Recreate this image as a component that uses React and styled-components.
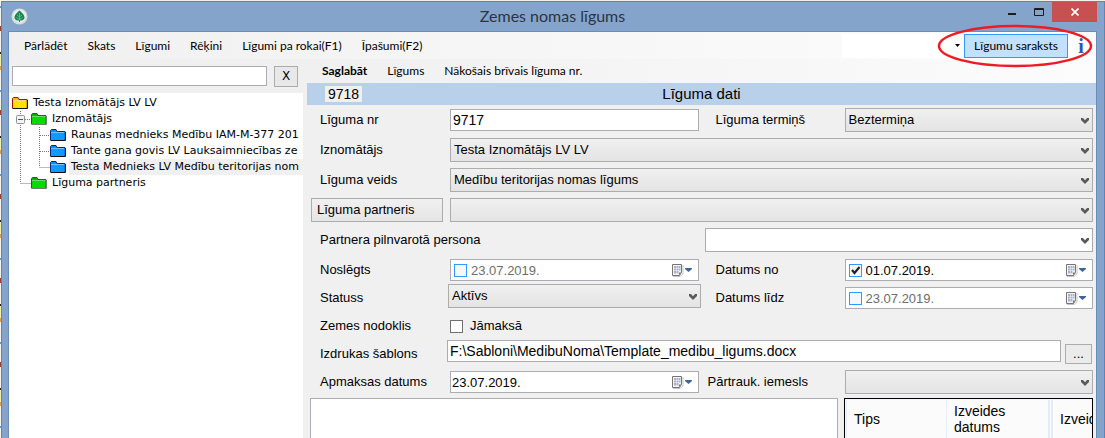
import React from "react";
import styled, { createGlobalStyle, css } from "styled-components";

const ui = 'Lato, "Open Sans", sans-serif';
const form = '"Liberation Sans", Arial, sans-serif';
const treeFont = '"DejaVu Sans", Verdana, sans-serif';
const edge = "#abadb3";

const Global = createGlobalStyle`
  *, *::before, *::after { box-sizing: border-box; }
  body { margin: 0; background: #f1f1ec; overflow: hidden; }
  button, input, select, textarea { font: inherit; color: inherit; margin: 0; border-radius: 0; }
`;

const Desktop = styled.div`
  height: 100vh;
  padding: 1px 0 0 1px;
  color: #000;
  font: 13px/16px ${form};
  background: repeating-linear-gradient(
    #f4f4f0 0 6px, #5aa0dc 6px 8px, #f4f4f0 8px 26px, #a04030 26px 31px,
    #f4f4f0 31px 52px, #222 52px 54px, #eeeeb0 54px 66px, #e8a050 66px 70px, #f4f4f0 70px 84px
  ) 0 0 / 1px 100% no-repeat, #f1f1ec;
`;

const Window = styled.div`
  height: 100%;
  display: flex;
  flex-direction: column;
  padding: 0 7px 0 6px;
  border: 1px solid #6283ae;
  border-bottom: 0;
  background: #85a4cc;
  overflow: hidden;
`;

const TitleBar = styled.header`
  display: grid;
  grid-template-columns: 1fr auto 1fr;
  height: 29px;
  flex: none;
`;

const AppIcon = styled.svg`
  margin: 6px 0 0 3px;
`;

const Title = styled.h1`
  margin: 0;
  font: 16px/28px ${ui};
  color: #2d3440;
`;

const WindowButtons = styled.div`
  display: flex;
  justify-content: flex-end;
  align-items: flex-start;
`;

const WindowButton = styled.button`
  display: grid;
  place-items: center;
  width: ${(p) => (p.$close ? 45 : 27)}px;
  height: 20px;
  padding: 0;
  border: 0;
  background: ${(p) => (p.$close ? "#c75050" : "transparent")};
`;

const Client = styled.div`
  flex: 1;
  min-height: 0;
  display: flex;
  flex-direction: column;
  border: 1px solid #6b8cb6;
  border-bottom: 0;
  background: #f0f0f0;
`;

const MenuBar = styled.nav`
  display: flex;
  align-items: center;
  flex: none;
  height: 27px;
  padding-left: 15px;
  gap: 20px;
  font: 12px/16px ${ui};
  background: linear-gradient(90deg, #f0f0f0, #fdfdfd);
`;

const MenuButton = styled.button`
  padding: 0;
  border: 0;
  background: none;
  white-space: nowrap;
  font-weight: ${(p) => (p.$strong ? 700 : 400)};
`;

const MenuTools = styled.div`
  position: relative;
  display: flex;
  align-items: center;
  align-self: stretch;
  margin-left: auto;
  padding-right: 11px;
`;

const QuickInput = styled.input`
  width: 108px;
  height: 24px;
  border: 0;
  background: #fff;
`;

const CaretButton = styled.button`
  display: grid;
  place-items: center;
  width: 14px;
  height: 24px;
  padding: 0;
  border: 0;
  background: none;
`;

const ListButton = styled.button`
  width: 104px;
  height: 24px;
  padding: 0;
  border: 1px solid #3399ff;
  background: #c2e0ff;
  white-space: nowrap;
`;

const InfoButton = styled.button`
  width: 8px;
  margin-left: 9px;
  padding: 0;
  border: 0;
  background: none;
  color: #2f55b8;
  font: bold 20px/20px "Liberation Serif", serif;
`;

const Marker = styled.svg`
  position: absolute;
  right: 3px;
  top: -8px;
  pointer-events: none;
`;

const Body = styled.div`
  flex: 1;
  min-height: 0;
  display: grid;
  grid-template-columns: 294px minmax(0, 1fr);
  column-gap: 4px;
`;

const Sidebar = styled.aside`
  display: flex;
  flex-direction: column;
  min-width: 0;
  min-height: 0;
`;

const SearchRow = styled.div`
  display: flex;
  align-items: center;
  gap: 7px;
  height: 34px;
  padding: 0 5px 0 3px;
`;

const SearchInput = styled.input`
  flex: 1;
  min-width: 0;
  height: 20px;
  border: 1px solid ${edge};
  background: #fff;
`;

const ClearButton = styled.button`
  width: 24px;
  height: 21px;
  padding: 0;
  border: 1px solid #acacac;
  background: #e8e8e8;
  font: 12px/16px ${treeFont};
`;

const Tree = styled.ul`
  flex: 1;
  margin: 0;
  padding: 2px 0 0 3px;
  list-style: none;
  background: #fff;
  overflow: hidden;
  font: 11px/16px ${treeFont};
`;

const TreeRow = styled.li`
  display: flex;
  height: 16px;
  white-space: nowrap;
  svg { flex: none; }
`;

const TreeLabel = styled.span`
  margin-left: 3px;
  padding: 0 2px;
  ${(p) => p.$selected && css`flex: 1; background: #f0f0f0;`}
`;

const Pane = styled.main`
  display: flex;
  flex-direction: column;
  min-width: 0;
  min-height: 0;
`;

const ToolRow = styled.div`
  display: flex;
  align-items: center;
  gap: 20px;
  height: 24px;
  flex: none;
  padding-left: 15px;
  font: 12px/16px ${ui};
  background: linear-gradient(90deg, #f0f0f0, #fcfcfc);
`;

const Band = styled.div`
  display: grid;
  grid-template-columns: 1fr auto 1fr;
  align-items: center;
  height: 22px;
  flex: none;
  background: #b9d0eb;
`;

const NextNumber = styled.output`
  justify-self: start;
  margin-left: 18px;
  padding: 0 3px;
  background: #f0f0f0;
  font-size: 14px;
`;

const BandTitle = styled.h2`
  margin: 0;
  font: 15px/20px ${form};
`;

const Row = styled.div`
  display: grid;
  grid-template-columns: 140px minmax(0, 1fr) 146px minmax(0, 1fr);
  align-items: center;
  flex: none;
  height: ${(p) => (p.$tight ? 28 : 30)}px;
  padding: 0 3px;
`;

const Label = styled.label`
  padding-left: ${(p) => (p.$second ? (p.$wide ? 9 : 17) : 10)}px;
  white-space: nowrap;
`;

const PartnerButton = styled.button`
  width: 132px;
  height: 24px;
  margin-left: 1px;
  padding: 0 5px;
  border: 1px solid #acacac;
  background: linear-gradient(#f0f0f0, #e5e5e5);
  text-align: left;
`;

const TextInput = styled.input`
  width: 100%;
  min-width: 0;
  height: 22px;
  padding: 0 2px;
  border: 1px solid ${edge};
  background: #fff;
  font-size: 14px;
`;

const SelectBox = styled.span`
  display: grid;
  align-items: center;
  grid-column: ${(p) => (p.$span ? `span ${p.$span}` : "auto")};
  > * { grid-area: 1 / 1; }
  > svg { justify-self: end; margin-right: 4px; pointer-events: none; }
  ${(p) => p.$raised && css`align-self: start; margin: 0 -2px;`}
  ${(p) => p.$inset && css`margin-left: 6px;`}
`;

const NativeSelect = styled.select`
  appearance: none;
  width: 100%;
  height: 24px;
  padding: 0 20px 0 3px;
  border: 1px solid #acacac;
  background: ${(p) => (p.$white ? "#fff" : "linear-gradient(#f0f0f0, #e4e4e4)")};
`;

const DateBox = styled.span`
  display: flex;
  align-items: center;
  height: 22px;
  padding: 0 5px 0 ${(p) => (p.$check ? 3 : 1)}px;
  border: 1px solid ${edge};
  background: #fff;
  color: ${(p) => (p.$off ? "#6d6d6d" : "#000")};
`;

const DateInput = styled.input`
  flex: 1;
  min-width: 0;
  height: 18px;
  padding: 0;
  border: 0;
  background: none;
`;

const PickerButton = styled.button`
  display: flex;
  padding: 0;
  border: 0;
  background: none;
`;

const Check = styled.input`
  appearance: none;
  flex: none;
  width: 13px;
  height: 13px;
  border: 1px solid ${(p) => (p.$blue ? "#3399ff" : "#707070")};
  background: ${(p) => (p.$blue ? "#f3f8ff" : "#fff")};
`;

const CheckWrap = styled.span`
  display: grid;
  margin-right: 4px;
  > * { grid-area: 1 / 1; }
  > svg { pointer-events: none; }
`;

const CheckLabel = styled.label`
  display: flex;
  align-items: center;
  gap: 7px;
`;

const FileRow = styled.div`
  grid-column: span 3;
  display: flex;
  gap: 4px;
  align-self: start;
  margin: 0 1px 0 -3px;
`;

const BrowseButton = styled.button`
  flex: none;
  width: 27px;
  height: 20px;
  margin-top: 4px;
  padding: 0;
  border: 1px solid #acacac;
  background: #ebebeb;
`;

const Bottom = styled.div`
  flex: 1;
  min-height: 0;
  display: grid;
  grid-template-columns: minmax(0, 528fr) minmax(0, 249fr);
  gap: 6px;
  padding: 1px 3px 0;
`;

const FieldGroup = styled.section`
  flex: none;
  padding-bottom: 1px;
`;

const Notes = styled.textarea`
  border: 1px solid ${edge};
  border-bottom: 0;
  background: #fff;
  resize: none;
`;

const TableFrame = styled.div`
  overflow: hidden;
  padding-top: 1px;
  padding-left: 1px;
  border: 1px solid #000;
  border-bottom: 0;
  background: #f3f7fd;
`;

const Table = styled.table`
  width: 320px;
  table-layout: fixed;
  border-collapse: collapse;
  font-size: 14px;
  th {
    height: 38px;
    padding: 0 7px;
    border: 1px solid #e3ecf8;
    border-top: 0;
    background: #fbfbfb;
    font-weight: 400;
    text-align: left;
  }
  th:nth-child(2) { border-right: 5px double #e3ecf8; }
`;

const Chevron = () => (
  <svg width="8" height="7" viewBox="0 0 8 7" aria-hidden="true">
    <path d="M0 1H2L4 3.2L6 1H8V3L4 7L0 3Z" fill="#5a5a5a" />
  </svg>
);

const CalendarIcon = () => (
  <svg width="22" height="14" viewBox="0 0 22 14" aria-hidden="true">
    <path d="M2 13.5H9L12 11V2" fill="none" stroke="#c4c4c4" />
    <path d="M1.5 1.5H10.5V9.5L8.5 12.5H1.5Z" fill="#f4f6fa" stroke="#7d7272" strokeLinejoin="round" />
    <path d="M3 3H5V5H3ZM5.5 3H7.5V5H5.5ZM8 3H9.5V5H8ZM3 5.5H5V7.5H3ZM5.5 5.5H7.5V7.5H5.5ZM8 5.5H9.5V7.5H8ZM3 8H5V10.5H3ZM5.5 8H7.5V10.5H5.5Z" fill="#a3b3c9" />
    <path d="M8 12.5V9.5H10.5Z" fill="#7d7272" />
    <path d="M14 5H21V6L17.5 9L14 6Z" fill="#44639a" />
  </svg>
);

const folderColors = {
  yellow: ["#ffe100", "#a01000", "#ffc000"],
  green: ["#00dc00", "#087008", "#00b400"],
  blue: ["#0a9cff", "#002a78", "#0090f8"],
};

const Folder = ({ color }) => {
  const [fill, stroke, tab] = folderColors[color];
  return (
    <svg width="16" height="16" viewBox="0 0 16 16" aria-hidden="true">
      <path d="M0.5 13V3.5L1.5 2.5H6L7 4.5H15V13Z" fill={tab} stroke={stroke} />
      <path d="M1 6H14.5V13H1Z" fill={fill} />
      <path d="M1 5.5H14.5" stroke="#fff" strokeOpacity="0.45" />
      <path d="M0.5 13.5H15.5V5" fill="none" stroke={color === "green" ? "#708070" : "#111"} />
    </svg>
  );
};

const guidePaths = {
  pass: "M8.5 0V16",
  tee: "M8.5 0V16M9 8.5H19",
  elbow: "M8.5 0V8M8.5 8.5H19",
  expander: "M8.5 0V16M9 8.5H19",
};

const Guide = ({ kind }) => (
  <svg width="19" height="16" viewBox="0 0 19 16" aria-hidden="true">
    <path d={guidePaths[kind]} stroke="#777" strokeDasharray="1 1" />
    {kind === "expander" && (
      <>
        <rect x="4.5" y="4.5" width="8" height="8" rx="1" fill="#f4f4f4" stroke="#919191" />
        <path d="M6 8.5H11" stroke="#3a55a5" />
      </>
    )}
  </svg>
);

const treeRows = [
  { text: "Testa Iznomātājs LV LV", color: "yellow", guides: [] },
  { text: "Iznomātājs", color: "green", guides: ["expander"] },
  { text: "Raunas mednieks Medību IAM-M-377 201", color: "blue", guides: ["pass", "tee"] },
  { text: "Tante gana govis LV Lauksaimniecības ze", color: "blue", guides: ["pass", "tee"] },
  { text: "Testa Mednieks LV Medību teritorijas nom", color: "blue", guides: ["pass", "elbow"], selected: true },
  { text: "Līguma partneris", color: "green", guides: ["elbow"] },
];

const Select = ({ id, value = "", label, white, ...box }) => (
  <SelectBox {...box}>
    <NativeSelect id={id} aria-label={label} $white={white} defaultValue={value}>
      <option value={value}>{value}</option>
    </NativeSelect>
    <Chevron />
  </SelectBox>
);

const DateField = ({ id, value, check, checked }) => (
  <DateBox $check={check} $off={check && !checked}>
    {check && (
      <CheckWrap>
        <Check type="checkbox" $blue defaultChecked={checked} aria-label="Datums norādīts" />
        {checked && (
          <svg width="13" height="13" viewBox="0 0 13 13" aria-hidden="true">
            <path d="M3 6L5.5 9L10.5 3" fill="none" stroke="#222" strokeWidth="2.2" />
          </svg>
        )}
      </CheckWrap>
    )}
    <DateInput id={id} defaultValue={value} />
    <PickerButton aria-label="Kalendārs"><CalendarIcon /></PickerButton>
  </DateBox>
);

export default function App() {
  return (
    <Desktop>
      <Global />
      <Window>
        <TitleBar>
          <AppIcon width="17" height="17" viewBox="0 0 17 17" aria-hidden="true">
            <circle cx="8.5" cy="8.5" r="8" fill="#d9dcda" />
            <circle cx="8.5" cy="8" r="6.5" fill="#eceeed" />
            <path d="M8.5 2.5C10 4 13.5 6.5 13.5 9.5C13.5 12 11 12.5 9 12.5V14H8V12.5C6 12.5 3.5 12 3.5 9.5C3.5 6.5 7 4 8.5 2.5Z" fill="#168755" />
            <path d="M8.5 5V12M6 7L8.5 9L11 7M5.5 9.5L8.5 11.5L11.5 9.5" fill="none" stroke="#7cc3a2" strokeWidth="0.7" />
          </AppIcon>
          <Title>Zemes nomas līgums</Title>
          <WindowButtons>
            <WindowButton aria-label="Minimizēt">
              <svg width="8" height="8"><path d="M0 6H8" stroke="#1c1c1c" strokeWidth="2" /></svg>
            </WindowButton>
            <WindowButton aria-label="Maksimizēt">
              <svg width="10" height="8"><path d="M0.5 0.5H9.5V7.5H0.5ZM0 1.5H10" fill="none" stroke="#1c1c1c" /></svg>
            </WindowButton>
            <WindowButton $close aria-label="Aizvērt">
              <svg width="8" height="8"><path d="M0.5 0.5L7.5 7.5M7.5 0.5L0.5 7.5" stroke="#fff" strokeWidth="1.6" /></svg>
            </WindowButton>
          </WindowButtons>
        </TitleBar>
        <Client>
          <MenuBar>
            {["Pārlādēt", "Skats", "Līgumi", "Rēķini", "Līgumi pa rokai(F1)", "Īpašumi(F2)"].map((t) => (
              <MenuButton key={t}>{t}</MenuButton>
            ))}
            <MenuTools>
              <QuickInput aria-label="Ātrā meklēšana" />
              <CaretButton aria-label="Izvēlēties">
                <svg width="5" height="3"><path d="M0 0H5L2.5 3Z" fill="#000" /></svg>
              </CaretButton>
              <ListButton>Līgumu saraksts</ListButton>
              <InfoButton aria-label="Informācija">i</InfoButton>
              <Marker width="156" height="44" aria-hidden="true">
                <ellipse cx="78" cy="22" rx="76" ry="20" fill="none" stroke="#ed1c24" strokeWidth="2.5" />
              </Marker>
            </MenuTools>
          </MenuBar>
          <Body>
            <Sidebar>
              <SearchRow>
                <SearchInput aria-label="Meklēt" />
                <ClearButton>X</ClearButton>
              </SearchRow>
              <Tree>
                {treeRows.map((r) => (
                  <TreeRow key={r.text}>
                    {r.guides.map((g, i) => <Guide key={i} kind={g} />)}
                    <Folder color={r.color} />
                    <TreeLabel $selected={r.selected}>{r.text}</TreeLabel>
                  </TreeRow>
                ))}
              </Tree>
            </Sidebar>
            <Pane>
              <ToolRow>
                <MenuButton $strong>Saglabāt</MenuButton>
                <MenuButton>Līgums</MenuButton>
                <MenuButton>Nākošais brīvais līguma nr.</MenuButton>
              </ToolRow>
              <Band>
                <NextNumber>9718</NextNumber>
                <BandTitle>Līguma dati</BandTitle>
              </Band>
              <FieldGroup>
                <Row>
                  <Label htmlFor="nr">Līguma nr</Label>
                  <TextInput id="nr" defaultValue="9717" />
                  <Label htmlFor="term" $second>Līguma termiņš</Label>
                  <Select id="term" value="Beztermiņa" />
                </Row>
                <Row>
                  <Label htmlFor="lessor">Iznomātājs</Label>
                  <Select id="lessor" value="Testa Iznomātājs LV LV" $span={3} />
                </Row>
                <Row>
                  <Label htmlFor="kind">Līguma veids</Label>
                  <Select id="kind" value="Medību teritorijas nomas līgums" $span={3} />
                </Row>
                <Row>
                  <PartnerButton>Līguma partneris</PartnerButton>
                  <Select label="Līguma partneris" $span={3} />
                </Row>
                <Row>
                  <Label htmlFor="person">Partnera pilnvarotā persona</Label>
                  <span />
                  <Select id="person" white $span={2} $inset />
                </Row>
              </FieldGroup>
              <FieldGroup>
                <Row $tight>
                  <Label htmlFor="signed">Noslēgts</Label>
                  <DateField id="signed" value="23.07.2019." check />
                  <Label htmlFor="from" $second>Datums no</Label>
                  <DateField id="from" value="01.07.2019." check checked />
                </Row>
                <Row $tight>
                  <Label htmlFor="status">Statuss</Label>
                  <Select id="status" value="Aktīvs" $raised />
                  <Label htmlFor="to" $second>Datums līdz</Label>
                  <DateField id="to" value="23.07.2019." check />
                </Row>
                <Row $tight>
                  <Label as="span">Zemes nodoklis</Label>
                  <CheckLabel><Check type="checkbox" />Jāmaksā</CheckLabel>
                </Row>
                <Row $tight>
                  <Label htmlFor="template">Izdrukas šablons</Label>
                  <FileRow>
                    <TextInput id="template" defaultValue={"F:\\Sabloni\\MedibuNoma\\Template_medibu_ligums.docx"} />
                    <BrowseButton>...</BrowseButton>
                  </FileRow>
                </Row>
                <Row $tight>
                  <Label htmlFor="pay">Apmaksas datums</Label>
                  <DateField id="pay" value="23.07.2019." />
                  <Label htmlFor="reason" $second $wide>Pārtrauk. iemesls</Label>
                  <Select id="reason" />
                </Row>
              </FieldGroup>
              <Bottom>
                <Notes aria-label="Piezīmes" />
                <TableFrame>
                  <Table>
                    <colgroup><col style={{ width: 100 }} /><col style={{ width: 104 }} /><col /></colgroup>
                    <thead>
                      <tr><th>Tips</th><th>Izveides datums</th><th>Izveidoja</th></tr>
                    </thead>
                  </Table>
                </TableFrame>
              </Bottom>
            </Pane>
          </Body>
        </Client>
      </Window>
    </Desktop>
  );
}
